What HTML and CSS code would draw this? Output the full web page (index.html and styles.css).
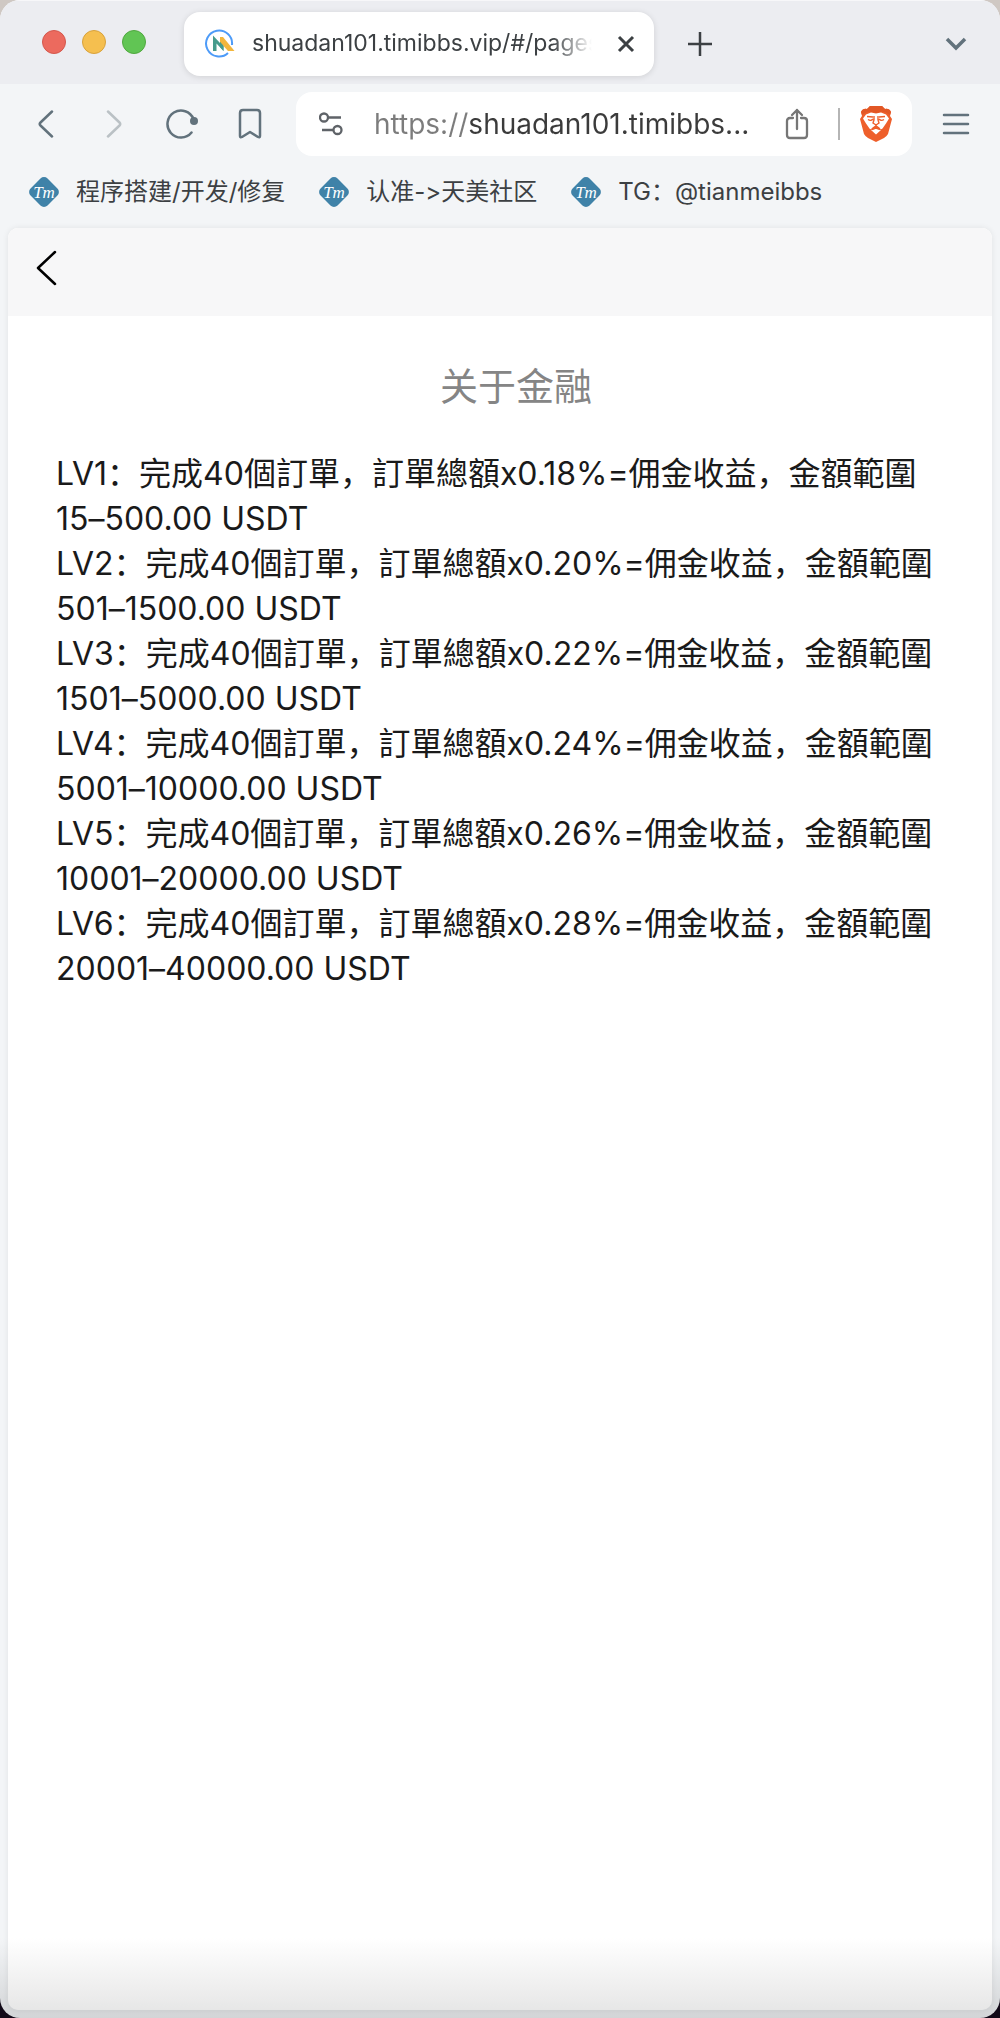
FILE: index.html
```html
<!doctype html>
<html lang="zh">
  <head>
    <meta charset="utf-8">
    <meta name="viewport" content="width=device-width, initial-scale=1">
    <title>关于金融</title>
    <link rel="stylesheet" href="styles.css">
  </head>
  <body>
    <div class="window">
        <div class="tab-bar">
            <div class="lights">
                <button class="light red" aria-label="Close window"></button>
                <button class="light yellow" aria-label="Minimize"></button>
                <button class="light green" aria-label="Zoom"></button>
            </div>
            <div class="tab">
                <svg width="30" height="30" viewBox="0 0 30 30" fill="none">
                    <path d="M27 16A13 13 0 1 0 23 24" stroke="#4d9bf8" stroke-width="2"/>
                    <path d="M8 22V6.500L15 14V9h3.500v13L11.500 14.500V22z" fill="#459b8c"/>
                    <path d="M15 8h3L29.500 22H23L15 13z" fill="#f3b63c"/>
                    <path d="M15 13l3.500 4v5L15 18z" fill="#459b8c"/>
                </svg>
                <span class="tab-title">shuadan101.timibbs.vip/#/pages</span>
                <button class="tab-close" aria-label="Close tab">
                    <svg width="18" height="18" viewBox="0 0 18 18" fill="none" stroke="#3c4043" stroke-width="3"><path d="M2 2l14 14M16 2L2 16"/></svg>
                </button>
            </div>
            <button class="new-tab" aria-label="New tab">
                <svg width="24" height="24" viewBox="0 0 24 24" fill="none" stroke="#3c4043" stroke-width="2.500"><path d="M12 0v24M0 12h24"/></svg>
            </button>
            <button class="side-button" aria-label="Search tabs">
                <svg width="22" height="16" viewBox="0 0 22 16" fill="none" stroke="#62727c" stroke-width="3.500"><path d="M2 3l9 9 9-9"/></svg>
            </button>
        </div>
        <div class="toolbar">
            <button class="tool" aria-label="Back">
                <svg width="28" height="28" viewBox="0 0 28 28" fill="none" stroke="#62727c" stroke-width="2.500" stroke-linecap="round" stroke-linejoin="round"><path d="M20 1.500L8.500 12.500q-1.500 1.500 0 3L20 26.500"/></svg>
            </button>
            <button class="tool" aria-label="Forward">
                <svg width="28" height="28" viewBox="0 0 28 28" fill="none" stroke="#bac1c5" stroke-width="2.500" stroke-linecap="round" stroke-linejoin="round"><path d="M8 1.500L19.500 12.500q1.500 1.500 0 3L8 26.500"/></svg>
            </button>
            <button class="tool" aria-label="Reload">
                <svg width="32" height="30" viewBox="0 0 32 30" fill="none"><path d="M25.500 23.500A13.500 13.500 0 1 1 27.500 10" stroke="#62727c" stroke-width="2.500" stroke-linecap="round"/><circle cx="28" cy="12" r="4" fill="#62727c"/></svg>
            </button>
            <button class="tool" aria-label="Bookmark">
                <svg width="24" height="32" viewBox="0 0 24 32" fill="none" stroke="#62727c" stroke-width="2.500" stroke-linejoin="round"><path d="M2 5q0-3 3-3h14q3 0 3 3v23q0 2-2 1l-8-5-8 5q-2 1-2-1z"/></svg>
            </button>
            <div class="address">
                <button class="site-info" aria-label="Site information">
                    <svg width="26" height="24" viewBox="0 0 26 24" fill="none" stroke="#5f6368" stroke-width="2.300"><circle cx="5" cy="5.500" r="4"/><path d="M9 5.500h13M3 18h11"/><circle cx="18.500" cy="18" r="4"/></svg>
                </button>
                <input class="url" type="text" aria-label="Address" value="https://shuadan101.timibbs...">
                <button class="share" aria-label="Share">
                    <svg width="24" height="32" viewBox="0 0 24 32" fill="none" stroke="#767676" stroke-width="2.300" stroke-linecap="round" stroke-linejoin="round"><path d="M8 10H5q-3 0-3 3v14q0 3 3 3h14q3 0 3-3V13q0-3-3-3h-3M12 21V2M7 7l5-5 5 5"/></svg>
                </button>
                <span class="divider"></span>
                <button class="shield" aria-label="Brave Shields">
                    <svg width="32" height="36" viewBox="0 0 32 36">
                        <path d="M10 0h12l3 3q4-1 6 3l-1 4 2 3-4 15q-1 2-4 4l-8 4-8-4q-3-2-4-4L0 13l2-3-1-4q2-4 6-3z" fill="#ee5f2b"/>
                        <path d="M10 0h12l3 3q4-1 6 3l-1 3q-5-4-10-3l-4 1-4-1Q7 5 2 9L1 6q2-4 6-3z" fill="#e25725"/>
                        <path d="M11 6.500l5 1 5-1 5 2 3 4-3 5-3.500 5q-2 2-3-1L16 19l-3.500 2.500q-2 3-3 1L6 17.500l-3-5 3-4z" fill="#fff"/>
                        <path d="M16 22l5 2-5 4.500-5-4.500z" fill="#fff"/>
                        <path d="M7 10.500l6 .500M19 11l6-.500M8 13.500q3 2 5-.500M24 13.500q-3 2-5-.500M14 10v4l-1 3 3 2 3-2-1-3v-4M16 19v3l-4 1.500M16 22l4 1.500" fill="none" stroke="#ee5f2b" stroke-width="1.400"/>
                    </svg>
                </button>
            </div>
            <button class="side-button" aria-label="Menu">
                <svg width="28" height="22" viewBox="0 0 28 22" fill="none" stroke="#62727c" stroke-width="2.500" stroke-linecap="round"><path d="M2 2h24M2 11h24M2 20h24"/></svg>
            </button>
        </div>
        <div class="bookmarks">
            <a href="#">
                <svg class="tm" width="30" height="30" viewBox="0 0 30 30"><rect x="3" y="3" width="24" height="24" rx="5" transform="rotate(45 15 15)" fill="#3f82a8"/><text x="15" y="21" text-anchor="middle">Tm</text></svg>
                程序搭建/开发/修复
            </a>
            <a href="#">
                <svg class="tm" width="30" height="30" viewBox="0 0 30 30"><rect x="3" y="3" width="24" height="24" rx="5" transform="rotate(45 15 15)" fill="#3f82a8"/><text x="15" y="21" text-anchor="middle">Tm</text></svg>
                认准-&gt;天美社区
            </a>
            <a href="#">
                <svg class="tm" width="30" height="30" viewBox="0 0 30 30"><rect x="3" y="3" width="24" height="24" rx="5" transform="rotate(45 15 15)" fill="#3f82a8"/><text x="15" y="21" text-anchor="middle">Tm</text></svg>
                TG：@tianmeibbs
            </a>
        </div>
        <div class="page">
            <div class="page-header">
                <button class="page-back" aria-label="返回">
                    <svg width="22" height="36" viewBox="0 0 22 36" fill="none" stroke="#000" stroke-width="2.500" stroke-linecap="round" stroke-linejoin="round"><path d="M20 2L3 18l17 16"/></svg>
                </button>
            </div>
            <div class="page-content">
                <h1>关于金融</h1>
                <div class="levels">
                    <p>LV1：完成40個訂單，訂單總額x0.18%=佣金收益，金額範圍<br>15–500.00 USDT</p>
                    <p>LV2：完成40個訂單，訂單總額x0.20%=佣金收益，金額範圍<br>501–1500.00 USDT</p>
                    <p>LV3：完成40個訂單，訂單總額x0.22%=佣金收益，金額範圍<br>1501–5000.00 USDT</p>
                    <p>LV4：完成40個訂單，訂單總額x0.24%=佣金收益，金額範圍<br>5001–10000.00 USDT</p>
                    <p>LV5：完成40個訂單，訂單總額x0.26%=佣金收益，金額範圍<br>10001–20000.00 USDT</p>
                    <p>LV6：完成40個訂單，訂單總額x0.28%=佣金收益，金額範圍<br>20001–40000.00 USDT</p>
                </div>
            </div>
        </div>
    </div>
  </body>
</html>
```
FILE: styles.css
```css
*{
    box-sizing: border-box;
}
body{
    margin:0;
    font-family: Inter,"Noto Sans CJK SC",sans-serif;
    background: linear-gradient(#cfc8c3 50%, #120a18 50%);
}
button{
    display:flex;
    align-items: center;
    justify-content: center;
    flex-shrink: 0;
    padding:0;
    border:none;
    background: none;
    cursor: pointer;
}
svg{
    flex-shrink: 0;
}
.window{
    display:flex;
    flex-direction: column;
    min-height:100vh;
    padding-bottom:8px;
    background: linear-gradient(to top, #d3d5d7, #f3f5f7 80px);
    border-radius:20px;
    overflow: hidden;
}
.tab-bar{
    display:flex;
    align-items: center;
    height:84px;
    padding-top:3px;
    background-color: #ecedf1;
    border-top:1px solid #f7f7f9;
}
.lights{
    display:flex;
    gap:16px;
    margin:0 38px 0 42px;
    padding-bottom:4px;
}
.light{
    width:24px;
    height:24px;
    border-radius:50%;
}
.red{
    background-color: #ec6a5e;
    border:1px solid #d4574c;
}
.yellow{
    background-color: #f5bf4f;
    border:1px solid #d8a23c;
}
.green{
    background-color: #61c554;
    border:1px solid #50a83f;
}
.tab{
    display:flex;
    align-items: center;
    flex:0 1 470px;
    min-width:0;
    height:64px;
    padding:0 10px 0 21px;
    background-color: white;
    border-radius:16px;
    box-shadow: 0 1px 6px rgba(0, 0, 0, 0.12);
}
.tab-title{
    flex:1;
    margin-left:17px;
    padding-bottom:2px;
    overflow: hidden;
    white-space: nowrap;
    font-size:23px;
    line-height:30px;
    color:#3c4043;
    -webkit-mask-image: linear-gradient(to left, transparent, #000 40px);
    mask-image: linear-gradient(to left, transparent, #000 40px);
}
.tab-close{
    width:36px;
    height:36px;
    margin-left:16px;
}
.new-tab{
    width:48px;
    height:48px;
    margin-left:22px;
}
.side-button{
    width:88px;
    height:64px;
    margin-left:auto;
}
.toolbar{
    display:flex;
    align-items: center;
    height:80px;
    padding-left:12px;
}
.tool{
    width:68px;
    height:64px;
}
.address{
    display:flex;
    align-items: center;
    flex:1;
    min-width:0;
    height:64px;
    margin-left:12px;
    background-color: white;
    border-radius:16px;
}
.site-info,
.shield{
    width:72px;
    height:64px;
}
.url{
    flex:1;
    min-width:0;
    height:64px;
    padding:0 0 0 6px;
    border:none;
    outline:none;
    font-family: inherit;
    font-size:28px;
    color:transparent;
    /* grey for the scheme, dark for the host */
    background: linear-gradient(to right, #7c7c7c 101px, #3b3b3b 101px);
    -webkit-background-clip: text;
    background-clip: text;
}
.share{
    width:80px;
    height:64px;
    padding-right:2px;
}
.divider{
    width:2px;
    height:32px;
    background-color: #b5b5b5;
}
.bookmarks{
    display:flex;
    align-items: center;
    gap:34px;
    height:64px;
    padding:0 29px 8px;
}
.bookmarks a{
    display:flex;
    align-items: center;
    gap:17px;
    font-size:24px;
    line-height:30px;
    font-feature-settings: "calt" 0;
    white-space: nowrap;
    color:#3c4043;
    text-decoration: none;
}
.tm text{
    font-family: "Liberation Serif",serif;
    font-style: italic;
    font-size:17px;
    fill:white;
}
.page{
    display:flex;
    flex-direction: column;
    flex:1;
    margin:0 8px;
    background: linear-gradient(to top, #e7e7e7, white 72px);
    border-radius:10px;
    overflow: hidden;
    box-shadow: 0 0 6px rgba(0, 0, 0, 0.08);
}
.page-header{
    height:88px;
    padding:4px 0 0 16px;
    background-color: #f7f7f8;
}
.page-back{
    width:44px;
    height:72px;
}
.page-content{
    padding:47px 16px 0 48px;
}
h1{
    margin:0 0 42px;
    text-align: center;
    font-size:38px;
    line-height:46px;
    font-weight: 400;
    color:#858585;
}
.levels{
    font-size:32px;
    line-height:45px;
    font-feature-settings: "calt" 0;
    color:#1a1a1a;
}
.levels p{
    margin:0;
}
```
